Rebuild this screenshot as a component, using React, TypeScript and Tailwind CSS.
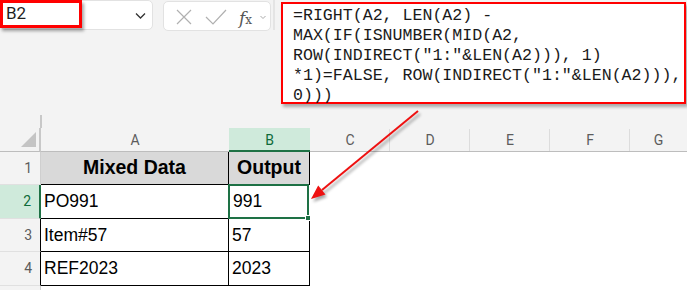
import React from "react";

function ColHeader({ w, label, sel, sep = true }: { w: string; label: string; sel?: boolean; sep?: boolean }) {
  return (
    <div
      className={`${w} h-full flex items-center justify-center text-[14px] relative ${
        sel ? "bg-[#cfeadb] text-[#0e6b3a] border-b-2 border-[#1e7145]" : "text-[#5c5c5c] border-b border-[#bdbdbd]"
      }`}
    >
      <span className="mt-[2px]">{label}</span>
      {sep && !sel && <div className="absolute right-0 top-[1px] bottom-0 w-px bg-[#dcdcdc]" />}
    </div>
  );
}

function RowHead({ n, h, cls }: { n: string; h: string; cls: string }) {
  return (
    <div className={`w-[41px] ${h} flex items-center justify-end pr-[8px] text-[14px] border-b border-b-[#e0e0e0] ${cls}`}>
      {n}
    </div>
  );
}

export default function App() {
  const mono = { fontFamily: '"Liberation Mono", "DejaVu Sans Mono", monospace' };
  const sans = { fontFamily: '"Liberation Sans", Arial, sans-serif' };
  const ui = { fontFamily: 'Roboto, "Noto Sans", sans-serif' };
  const plain = "bg-[#f3f3f3] text-[#5c5c5c]";
  return (
    <div className="w-[687px] h-[290px] bg-[#f3f3f3] relative overflow-hidden" style={ui}>
      {/* Top area */}
      <div className="flex h-[128px]">
        <div className="w-[281px] flex flex-col">
          <div className="flex items-start">
            {/* Name box */}
            <div className="w-[153px] h-[30px] bg-white border border-[#e2e2e2] rounded-[5px] flex items-start relative">
              <div className="w-[82px] h-[28px] -mt-px -ml-px border-[3px] border-[#ff0000] shadow-[2px_3px_3px_rgba(0,0,0,0.35)] flex items-center pl-[3px] text-[17px] text-[#1f1f1f] bg-white">
                B2
              </div>
              <svg className="absolute right-[6px] top-[11px]" width="11" height="8" viewBox="0 0 11 8">
                <path d="M1 1.5 L5.5 6 L10 1.5" fill="none" stroke="#333" strokeWidth="1.3" />
              </svg>
            </div>
            {/* Formula buttons */}
            <div className="ml-[10px] w-[108px] h-[30px] mt-px bg-white border border-[#e2e2e2] rounded-[5px] flex items-center relative">
              <svg className="absolute left-[12px] top-[7px]" width="16" height="16" viewBox="0 0 16 16">
                <path d="M1 1 L15 15 M15 1 L1 15" stroke="#b0b0b0" strokeWidth="1.2" fill="none" />
              </svg>
              <svg className="absolute left-[41px] top-[7px]" width="22" height="16" viewBox="0 0 22 16">
                <path d="M1 8 L8 15 L21 1" stroke="#b0b0b0" strokeWidth="1.2" fill="none" />
              </svg>
              <span
                className="absolute left-[75px] top-[4px] text-[17px] italic text-[#555]"
                style={{ fontFamily: '"DejaVu Serif", "Liberation Serif", serif' }}
              >
                f<span className="text-[12px] not-italic">x</span>
              </span>
              <svg className="absolute left-[96px] top-[13px]" width="6" height="5" viewBox="0 0 6 5">
                <path d="M0.5 1 L3 3.5 L5.5 1" stroke="#aaa" strokeWidth="1" fill="none" />
              </svg>
            </div>
            <div className="ml-[2px] w-[2px] h-[30px] bg-[#e4e4e4]" />
          </div>
          <div className="flex-1" />
          <div className="ml-[40px] w-[2px] h-[13px] bg-[#c8c8c8]" />
        </div>
        {/* Formula box */}
        <div
          className="mt-[2px] w-[405px] h-[102px] bg-white border-[2px] border-[#ff0000] shadow-[2px_3px_3px_rgba(0,0,0,0.3)] pl-[10px] pt-[2px] text-[16.6px] leading-[20px] text-[#1a1a1a] whitespace-pre"
          style={mono}
        >
          <div>=RIGHT(A2, LEN(A2) -</div>
          <div>MAX(IF(ISNUMBER(MID(A2,</div>
          <div>ROW(INDIRECT("1:"&amp;LEN(A2))), 1)</div>
          <div>*1)=FALSE, ROW(INDIRECT("1:"&amp;LEN(A2))),</div>
          <div>0)))</div>
        </div>
      </div>

      {/* Column headers */}
      <div className="flex h-[24px]">
        <div className="w-[41px] h-full border-r-2 border-[#c8c8c8] border-b border-b-[#bdbdbd] relative">
          <svg className="absolute right-[3px] bottom-[4px]" width="15" height="15" viewBox="0 0 15 15">
            <polygon points="15,0 15,15 0,15" fill="#c4c4c4" />
          </svg>
        </div>
        <ColHeader w="w-[188px]" label="A" sep={false} />
        <ColHeader w="w-[81px]" label="B" sel />
        <ColHeader w="w-[80px]" label="C" />
        <ColHeader w="w-[80px]" label="D" />
        <ColHeader w="w-[80px]" label="E" />
        <ColHeader w="w-[80px]" label="F" />
        <ColHeader w="w-[57px]" label="G" sep={false} />
      </div>

      {/* Rows */}
      <div className="flex bg-white h-[138px]" style={sans}>
        <div className="flex flex-col w-[41px] bg-[#f3f3f3]" style={ui}>
          <RowHead n="1" h="h-[33px]" cls={`${plain} border-r border-r-[#cfcfcf]`} />
          <RowHead n="2" h="h-[34px]" cls="bg-[#cfeadb] text-[#0e6b3a] border-r-2 border-r-[#1e7145]" />
          <RowHead n="3" h="h-[33px]" cls={`${plain} border-r border-r-black`} />
          <RowHead n="4" h="h-[34px]" cls={`${plain} border-r border-r-black`} />
          <div className="flex-1 border-r border-[#cfcfcf]" />
        </div>
        <div className="flex flex-col">
          {/* Row 1 */}
          <div className="flex h-[33px]">
            <div className="w-[188px] bg-[#d9d9d9] border-r border-b border-black flex items-center justify-center font-bold text-[19.5px] text-black">
              Mixed Data
            </div>
            <div className="w-[81px] bg-[#d9d9d9] border-r border-b border-black flex items-center justify-center font-bold text-[19.5px] text-black">
              Output
            </div>
          </div>
          {/* Row 2 */}
          <div className="flex h-[34px]">
            <div className="w-[188px] border-r border-b border-black flex items-center pl-[3px] text-[17.5px] text-black">
              PO991
            </div>
            <div className="w-[81px] -mt-px -ml-px h-[35px] border-2 border-[#1e7145] flex items-center pl-[3px] text-[17.5px] text-black relative">
              991
              <div className="absolute -right-[4px] -bottom-[4px] w-[6px] h-[6px] bg-[#1e7145] border border-white" />
            </div>
          </div>
          {/* Row 3 */}
          <div className="flex h-[33px]">
            <div className="w-[188px] border-r border-b border-black flex items-center pl-[3px] text-[17.5px] text-black">
              Item#57
            </div>
            <div className="w-[81px] border-r border-b border-black flex items-center pl-[3px] text-[17.5px] text-black">
              57
            </div>
          </div>
          {/* Row 4 */}
          <div className="flex h-[34px]">
            <div className="w-[188px] border-r border-b border-black flex items-center pl-[3px] text-[17.5px] text-black">
              REF2023
            </div>
            <div className="w-[81px] border-r border-b border-black flex items-center pl-[3px] text-[17.5px] text-black">
              2023
            </div>
          </div>
        </div>
      </div>

      {/* Annotation arrow */}
      <svg className="absolute left-0 top-0 pointer-events-none" width="687" height="290" viewBox="0 0 687 290">
        <defs>
          <filter id="blur" x="-20%" y="-20%" width="140%" height="140%">
            <feGaussianBlur stdDeviation="1.5" />
          </filter>
        </defs>
        <g opacity="0.35" filter="url(#blur)" transform="translate(2,3)">
          <line x1="418" y1="111" x2="322" y2="190" stroke="#000" strokeWidth="2" />
          <polygon points="311,199 325,194 318.6,186.2" fill="#000" />
        </g>
        <line x1="418" y1="111" x2="322" y2="190" stroke="#ee1111" strokeWidth="2" />
        <polygon points="311,199 325.5,194.5 318.2,185.6" fill="#ee1111" />
      </svg>
    </div>
  );
}
